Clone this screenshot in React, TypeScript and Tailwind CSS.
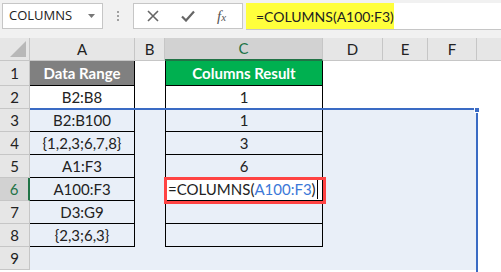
import React from 'react';

const cols = ['A', 'B', 'C', 'D', 'E', 'F'];

const data: { a: string; c: string }[] = [
  { a: 'B2:B8', c: '1' },
  { a: 'B2:B100', c: '1' },
  { a: '{1,2,3;6,7,8}', c: '3' },
  { a: 'A1:F3', c: '6' },
  { a: 'A100:F3', c: '' },
  { a: 'D3:G9', c: '' },
  { a: '{2,3;6,3}', c: '' },
];

const cellFont = { fontFamily: 'Lato, "Liberation Sans", sans-serif' };

export default function App() {
  return (
    <div className="relative h-[272px] w-[501px] overflow-hidden bg-white text-[#222]" style={cellFont}>
      {/* Formula bar */}
      <div className="flex h-[38px] items-start bg-[#f1f1f1] pt-[3px]">
        <div
          className="ml-[2px] flex h-[26px] w-[101px] items-center justify-between border border-[#c6c6c6] bg-white pl-[6px] pr-[7px] text-[13px] text-[#222]"
          style={{ fontFamily: '"Open Sans", sans-serif' }}
        >
          <span>COLUMNS</span>
          <svg width="7" height="4" viewBox="0 0 7 4">
            <path d="M0 0h7L3.5 4z" fill="#777" />
          </svg>
        </div>
        <div className="flex h-[26px] w-[30px] flex-col items-center justify-center gap-[2px]">
          <span className="h-[2px] w-[2px] bg-[#a0a0a0]" />
          <span className="h-[2px] w-[2px] bg-[#a0a0a0]" />
          <span className="h-[2px] w-[2px] bg-[#a0a0a0]" />
        </div>
        <div className="flex h-[26px] w-[110px] items-center border border-[#c6c6c6] bg-white pl-[13px]">
          <svg width="12" height="12" viewBox="0 0 12 12">
            <path d="M1 1l10 10M11 1L1 11" stroke="#666" strokeWidth="1.6" />
          </svg>
          <svg className="ml-[22px]" width="14" height="12" viewBox="0 0 14 12">
            <path d="M1 6.5l4 4L13 1.5" stroke="#666" strokeWidth="2.2" fill="none" />
          </svg>
          <span
            className="ml-[22px] text-[15px] italic text-[#555]"
            style={{ fontFamily: '"Liberation Serif", serif' }}
          >
            f<span className="text-[11px]">x</span>
          </span>
        </div>
        <div className="ml-[3px] flex h-[27px] flex-1 border-b border-[#c6c6c6] bg-white">
          <div className="flex h-[26px] w-[148px] items-center bg-[#ffff3c] pl-[10px] text-[14px] text-[#222]">
            =COLUMNS(A100:F3)
          </div>
        </div>
      </div>

      {/* Sheet grid */}
      <div className="grid grid-cols-[30px_105px_30px_158px_60px_45px_49px_1fr] grid-rows-[23px_25px_repeat(8,23px)] text-[15px]">
        {/* header row */}
        <div className="relative border-b border-r border-[#c6c6c6] bg-[#e6e6e6]">
          <svg className="absolute bottom-[3px] right-[3px]" width="16" height="16" viewBox="0 0 16 16">
            <path d="M16 0V16H0z" fill="#b8b8b8" />
          </svg>
        </div>
        {cols.map((c) =>
          c === 'C' ? (
            <div
              key={c}
              className="flex items-center justify-center border-b-2 border-r border-b-[#217346] border-r-[#c6c6c6] bg-[#d2d2d2] text-[#217346]"
            >
              {c}
            </div>
          ) : (
            <div
              key={c}
              className="flex items-center justify-center border-b border-r border-[#c6c6c6] bg-[#e6e6e6] text-[#222]"
            >
              {c}
            </div>
          )
        )}
        <div className="border-b border-[#c6c6c6] bg-[#e6e6e6]" />

        {/* row 1 */}
        <div className="flex items-center justify-center border-b border-r border-[#c6c6c6] bg-[#e6e6e6]">1</div>
        <div className="flex items-center justify-center border-b border-r border-black bg-[#808080] font-bold text-white">
          Data Range
        </div>
        <div className="bg-white" />
        <div className="flex items-center justify-center border-b border-l border-r border-black bg-[#00b050] font-bold text-white">
          Columns Result
        </div>
        <div className="bg-white" />
        <div className="bg-white" />
        <div className="bg-white" />
        <div className="bg-white" />

        {data.map((r, i) => {
          const row = i + 2;
          const sel = row >= 3;
          const fill = sel ? 'bg-[#e9eff8]' : 'bg-white';
          const active = row === 6;
          return (
            <React.Fragment key={row}>
              {active ? (
                <div className="flex items-center justify-center border-b border-r-2 border-b-[#c6c6c6] border-r-[#217346] bg-[#d2d2d2] text-[#217346]">
                  {row}
                </div>
              ) : (
                <div className="flex items-center justify-center border-b border-r border-[#c6c6c6] bg-[#e6e6e6]">
                  {row}
                </div>
              )}
              <div className={`flex items-center justify-center border-b border-r border-black ${fill}`}>{r.a}</div>
              <div className={fill} />
              {active ? (
                <div className="flex items-center border-b border-l border-r border-black bg-white pl-[2px] text-[15px]">
                  <span>=COLUMNS(</span>
                  <span className="text-[#3c78d8]">A100:F3</span>
                  <span>)</span>
                  <span className="ml-[1px] h-[19px] w-[1px] bg-black" />
                </div>
              ) : (
                <div className={`flex items-center justify-center border-b border-l border-r border-black ${fill}`}>
                  {r.c}
                </div>
              )}
              <div className={fill} />
              <div className={fill} />
              <div className={fill} />
              <div className="bg-white" />
            </React.Fragment>
          );
        })}

        {/* row 9 */}
        <div className="flex items-center justify-center border-b border-r border-[#c6c6c6] bg-[#e6e6e6]">9</div>
        <div className="bg-[#e9eff8]" />
        <div className="bg-[#e9eff8]" />
        <div className="bg-[#e9eff8]" />
        <div className="bg-[#e9eff8]" />
        <div className="bg-[#e9eff8]" />
        <div className="bg-[#e9eff8]" />
        <div className="bg-white" />
      </div>

      {/* selection outline */}
      <div className="absolute left-[30px] top-[108px] h-[200px] w-[448px] border-r-2 border-t-2 border-[#3a6bc4]" />
      <div className="absolute left-[474px] top-[107px] h-[6px] w-[6px] border border-white bg-[#3a6bc4]" />

      {/* red annotation box */}
      <div className="absolute left-[164px] top-[177px] h-[27px] w-[162px] border-[3px] border-[#ff4343]" />
    </div>
  );
}
